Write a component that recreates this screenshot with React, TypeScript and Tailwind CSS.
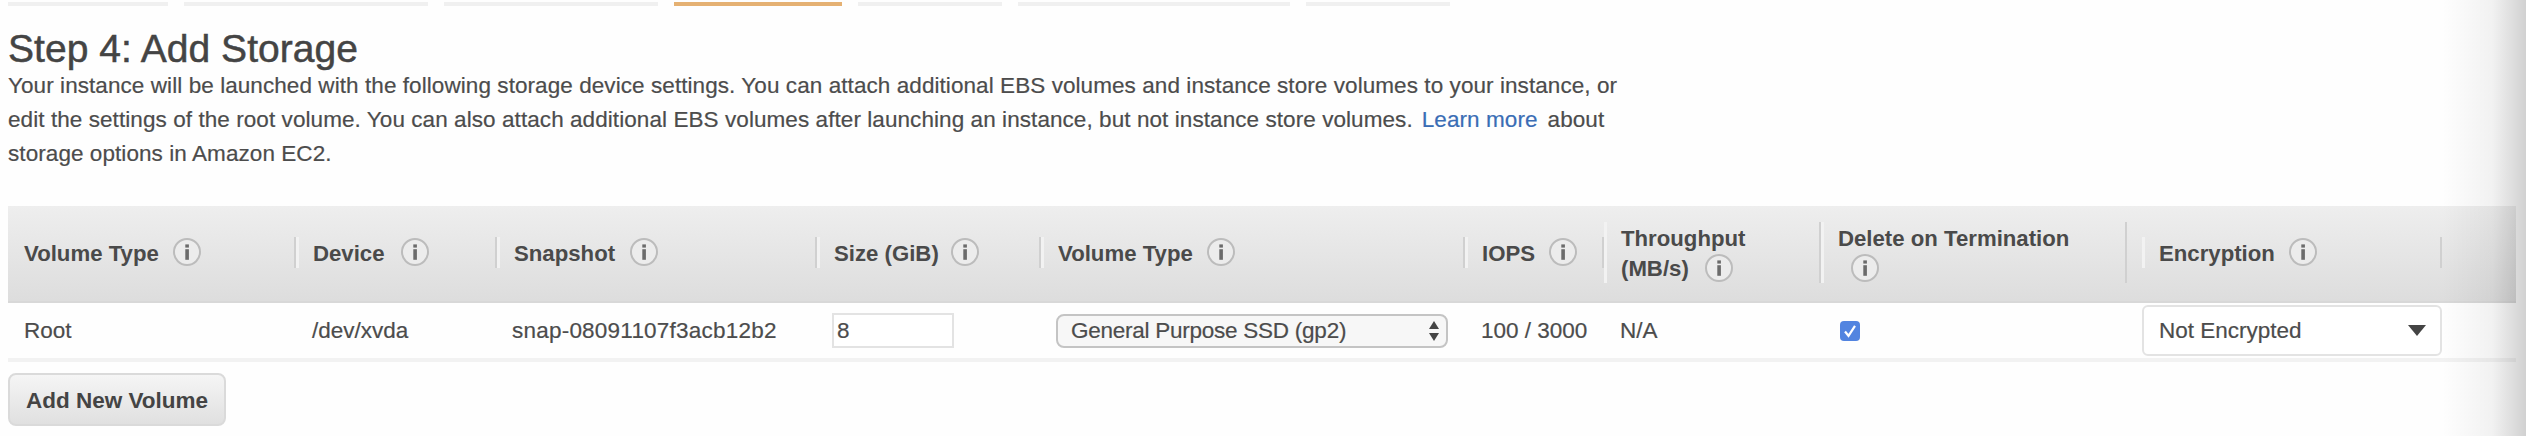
import React from "react";

function Info({ className = "" }: { className?: string }) {
  return (
    <svg className={`h-[30px] w-[30px] shrink-0 ${className}`} viewBox="0 0 30 30">
      <circle cx="15" cy="15" r="13" fill="#ececec" stroke="#bcbcbc" strokeWidth="2" />
      <rect x="13.3" y="7.4" width="3.6" height="3.2" fill="#6b6b6b" />
      <rect x="13.3" y="12.2" width="3.6" height="10.6" fill="#6b6b6b" />
    </svg>
  );
}

const steps = [
  "w-[160px] bg-[#f0f0f0]",
  "ml-4 w-[244px] bg-[#f0f0f0]",
  "ml-4 w-[214px] bg-[#f0f0f0]",
  "ml-4 w-[168px] bg-[#e5b173]",
  "ml-4 w-[144px] bg-[#f0f0f0]",
  "ml-4 w-[272px] bg-[#f0f0f0]",
  "ml-4 w-[144px] bg-[#f0f0f0]",
];

function Head({ label, width, text }: { label: string; width: string; text: string }) {
  return (
    <div className={`flex h-[31px] items-center border-r-2 border-l-3 border-l-[#f2f2f2] border-r-[#d0d0d0] pl-[14px] ${width}`}>
      <span className={`shrink-0 pt-[3px] whitespace-nowrap ${text}`}>{label}</span>
      <Info />
    </div>
  );
}

export default function App() {
  return (
    <div className="relative h-[436px] w-[2526px] overflow-hidden bg-[#fefefe] pl-2 font-['Liberation_Sans',Arial,sans-serif] text-[22.5px] text-[#4c4c4c]">
      <div className="flex pt-[2px]">
        {steps.map((s, i) => (
          <div key={i} className={`h-[4px] ${s}`} />
        ))}
      </div>

      <h1 className="mt-[20px] h-[45px] text-[39px] leading-[45px] tracking-[0.05px] whitespace-nowrap text-[#444] [-webkit-text-stroke:0.5px_#444]">Step 4: Add Storage</h1>
      <div className="-mt-[2px] h-[102px] leading-[34px] tracking-[0.072px] whitespace-nowrap [-webkit-text-stroke:0.2px_#4c4c4c]">
        <p>Your instance will be launched with the following storage device settings. You can attach additional EBS volumes and instance store volumes to your instance, or</p>
        <p>
          edit the settings of the root volume. You can also attach additional EBS volumes after launching an instance, but not instance store volumes.
          <a className="mr-[10px] ml-[9px] text-[#3a6db5] [-webkit-text-stroke:0.2px_#3a6db5]">Learn more</a>about
        </p>
        <p>storage options in Amazon EC2.</p>
      </div>

      <div className="mt-[35px] w-[2508px]">
        <div className="flex h-[97px] items-center border-b-2 border-[#d8d8d8] bg-linear-to-b from-[#eeeeee] to-[#dddddd] pb-[3px] text-[22.2px] font-bold text-[#4a4a4a]">
          <div className="flex h-[31px] w-[288px] items-center border-r-2 border-[#d0d0d0] pl-4">
            <span className="w-[148px] pt-[3px]">Volume Type</span>
            <Info />
          </div>
          <Head label="Device" width="w-[201px]" text="w-[87px]" />
          <Head label="Snapshot" width="w-[320px]" text="w-[115px]" />
          <Head label="Size (GiB)" width="w-[224px]" text="w-[116px]" />
          <Head label="Volume Type" width="w-[424px]" text="w-[148px]" />
          <Head label="IOPS" width="w-[139px]" text="w-[66px]" />
          <div className="h-[61px] w-[217px] border-r-2 border-l-3 border-l-[#f2f2f2] border-r-[#d0d0d0] pl-[14px] leading-[31px]">
            <div className="h-[31px] pt-px">Throughput</div>
            <div className="flex items-center">
              <span className="w-[83px]">(MB/s)</span>
              <Info />
            </div>
          </div>
          <div className="h-[61px] w-[306px] border-r-2 border-l-3 border-l-[#f2f2f2] border-r-[#d0d0d0] pl-[14px] leading-[31px]">
            <div className="h-[31px] pt-px whitespace-nowrap">Delete on Termination</div>
            <Info className="ml-[12px]" />
          </div>
          <div className="w-[15px]" />
          <Head label="Encryption" width="w-[300px]" text="w-[129px]" />
        </div>

        <div className="flex h-[59px] items-center border-b-4 border-[#f2f2f2] [-webkit-text-stroke:0.2px_#4c4c4c]">
          <span className="w-[304px] pl-4">Root</span>
          <span className="w-[200px]">/dev/xvda</span>
          <span className="w-[320px] tracking-[0.22px]">snap-08091107f3acb12b2</span>
          <div className="flex h-[35px] w-[122px] items-center border-2 border-[#e3e3e3] bg-white pl-[3px]">8</div>
          <div className="ml-[102px] flex h-[34px] w-[392px] items-center justify-between rounded-[8px] border-2 border-[#c4c4c4] bg-[#f7f7f7] pr-[6px] pl-[13px]">
            <span className="tracking-[-0.25px]">General Purpose SSD (gp2)</span>
            <svg className="h-5 w-3" viewBox="0 0 12 20">
              <path d="M6 0 11 8H1ZM6 20 11 12H1Z" fill="#444" />
            </svg>
          </div>
          <span className="ml-[33px] w-[139px]">100 / 3000</span>
          <span className="w-[220px]">N/A</span>
          <svg className="h-5 w-5" viewBox="0 0 20 20">
            <rect width="20" height="20" rx="4" fill="#5284e0" />
            <path d="m5 10.5 3.5 4.3 6.5-10" fill="none" stroke="#fff" strokeWidth="2.2" />
          </svg>
          <div className="ml-[282px] flex h-[51px] w-[300px] items-center justify-between rounded-[6px] border-2 border-[#e3e3e3] bg-white pr-[14px] pl-[15px]">
            <span>Not Encrypted</span>
            <svg className="h-[11px] w-[18px]" viewBox="0 0 18 11">
              <path d="M0 0H18L9 11Z" fill="#444" />
            </svg>
          </div>
        </div>
      </div>

      <button className="mt-[11px] h-[53px] w-[218px] rounded-[8px] border-2 border-[#dadada] bg-linear-to-b from-[#f5f5f5] to-[#e0e0e0] pt-[2px] text-[22.5px] font-bold whitespace-nowrap text-[#444]">Add New Volume</button>

      <div className="absolute top-0 right-0 h-full w-[84px] bg-linear-to-r from-black/0 via-black/5 via-60% to-black/18" />
    </div>
  );
}
